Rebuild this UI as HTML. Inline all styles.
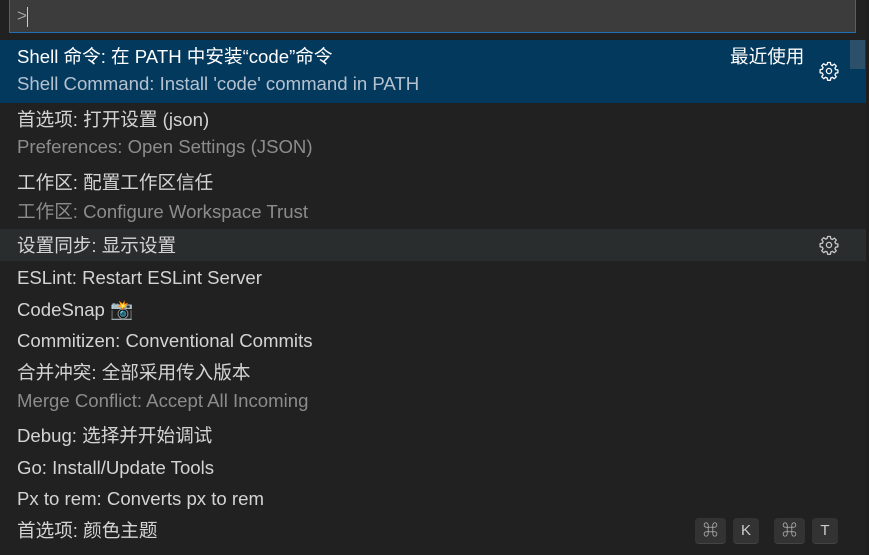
<!DOCTYPE html>
<html><head><meta charset="utf-8"><style>
html,body{margin:0;padding:0;}
body{width:869px;height:555px;background:#1e1e1e;position:relative;overflow:hidden;font-family:"Liberation Sans","Noto Sans CJK SC",sans-serif;}
#panel{position:absolute;left:0;top:0;width:866px;height:555px;background:#212121;}
#input{position:absolute;left:9px;top:0;width:845px;height:32px;background:#3c3c3c;border:1px solid #1f6fb2;border-top:none;}
#input span{position:absolute;left:7px;top:6px;color:#a0a0a0;font-size:17px;}
#input i{position:absolute;left:17px;top:7px;width:1px;height:20px;background:#ccc;}
.row{position:absolute;left:0;width:866px;}
.t{position:absolute;left:17px;font-size:18.6px;color:#d4d4d4;white-space:nowrap;line-height:20px;}
.s{color:#8c8c8c;}
.sel{background:#04395e;}
.hov{background:#2a2d2e;}
.gear{position:absolute;left:819px;width:20px;height:20px;}
.kb{position:absolute;top:518px;height:25px;background:#333;border-radius:4px;border-bottom:1px solid #444;color:#ccc;font-size:15px;text-align:center;line-height:25px;}
</style></head><body>
<div id="panel">
<div id="input"><span>&gt;</span><i></i></div>
<div class="row sel" style="top:40px;height:63px;"></div>
<div style="position:absolute;left:850px;top:40px;width:15px;height:29px;background:#2c5069;"></div>
<div class="row hov" style="top:229px;height:32px;"></div>

<div class="t" style="top:47px;color:#fff">Shell 命令: 在 PATH 中安装“code”命令</div>
<div class="t" style="top:74px;color:#b4c2cf">Shell Command: Install 'code' command in PATH</div>
<div class="t" style="top:47px;left:730px;color:#fff">最近使用</div>

<div class="t" style="top:110px">首选项: 打开设置 (json)</div>
<div class="t s" style="top:137px">Preferences: Open Settings (JSON)</div>
<div class="t" style="top:173px">工作区: 配置工作区信任</div>
<div class="t s" style="top:202px">工作区: Configure Workspace Trust</div>
<div class="t" style="top:236px">设置同步: 显示设置</div>
<div class="t" style="top:268px">ESLint: Restart ESLint Server</div>
<div class="t" style="top:300px">CodeSnap 📸</div>
<div class="t" style="top:331px">Commitizen: Conventional Commits</div>
<div class="t" style="top:363px">合并冲突: 全部采用传入版本</div>
<div class="t s" style="top:391px">Merge Conflict: Accept All Incoming</div>
<div class="t" style="top:426px">Debug: 选择并开始调试</div>
<div class="t" style="top:458px">Go: Install/Update Tools</div>
<div class="t" style="top:489px">Px to rem: Converts px to rem</div>
<div class="t" style="top:521px">首选项: 颜色主题</div>

<svg class="gear" style="top:61px" viewBox="0 0 20 20"><path d="M8.6 1.5h2.8l.4 2.3 1.6.7 1.9-1.4 2 2-1.4 1.9.7 1.6 2.3.4v2.8l-2.3.4-.7 1.6 1.4 1.9-2 2-1.9-1.4-1.6.7-.4 2.3H8.6l-.4-2.3-1.6-.7-1.9 1.4-2-2 1.4-1.9-.7-1.6-2.3-.4V8.6l2.3-.4.7-1.6-1.4-1.9 2-2 1.9 1.4 1.6-.7z" fill="none" stroke="#fff" stroke-width="1.3" stroke-linejoin="round"/><circle cx="10" cy="10" r="2.6" fill="none" stroke="#fff" stroke-width="1.3"/></svg>
<svg class="gear" style="top:235px" viewBox="0 0 20 20"><path d="M8.6 1.5h2.8l.4 2.3 1.6.7 1.9-1.4 2 2-1.4 1.9.7 1.6 2.3.4v2.8l-2.3.4-.7 1.6 1.4 1.9-2 2-1.9-1.4-1.6.7-.4 2.3H8.6l-.4-2.3-1.6-.7-1.9 1.4-2-2 1.4-1.9-.7-1.6-2.3-.4V8.6l2.3-.4.7-1.6-1.4-1.9 2-2 1.9 1.4 1.6-.7z" fill="none" stroke="#c8c8c8" stroke-width="1.3" stroke-linejoin="round"/><circle cx="10" cy="10" r="2.6" fill="none" stroke="#c8c8c8" stroke-width="1.3"/></svg>

<div class="kb" style="left:695px;width:31px;">⌘</div>
<div class="kb" style="left:733px;width:26px;">K</div>
<div class="kb" style="left:774px;width:31px;">⌘</div>
<div class="kb" style="left:812px;width:26px;">T</div>
</div>
</body></html>
